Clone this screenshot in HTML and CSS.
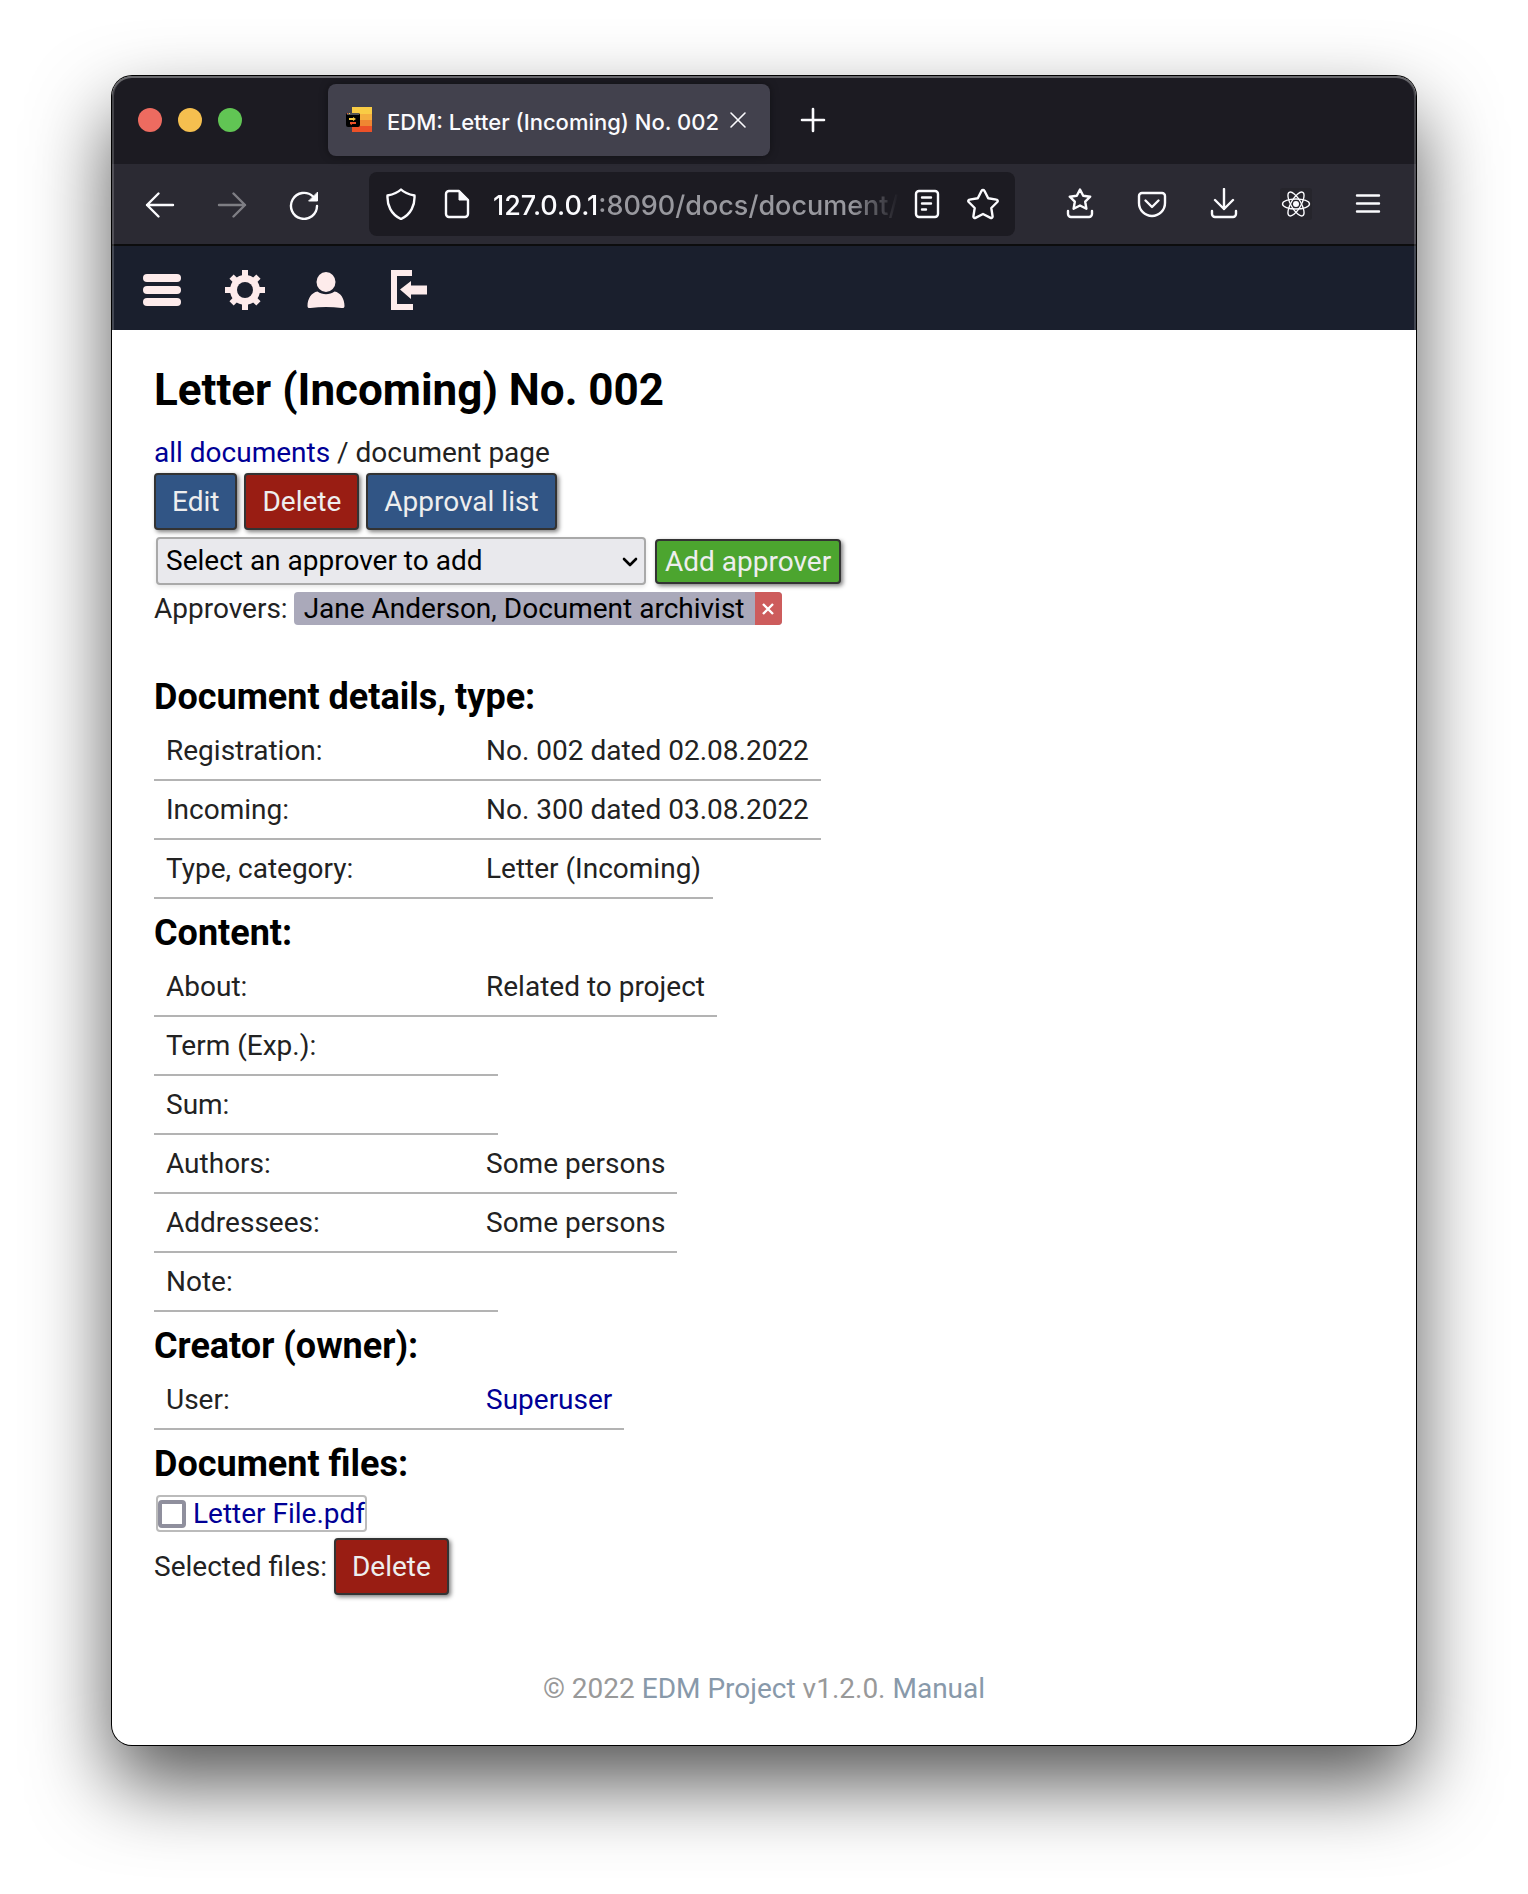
FILE: index.html
```html
<!DOCTYPE html>
<html lang="en">
<head>
<meta charset="utf-8">
<meta name="viewport" content="width=device-width, initial-scale=1">
<title>EDM: Letter (Incoming) No. 002</title>
<link rel="stylesheet" href="styles.css">
</head>
<body>
<div class="window">
  <div class="tabbar">
    <div class="lights"><span class="light light-close"></span><span class="light light-min"></span><span class="light light-max"></span></div>
    <div class="tab">
      <svg class="favicon" width="28" height="28" viewBox="0 0 28 28" aria-hidden="true">
        <path fill="#f9cc45" d="M7 1h20v7H7z"/><path fill="#f4ae3f" d="M7 8h20v6H7z"/><path fill="#ef8632" d="M7 14h20v6H7z"/><path fill="#ec5128" d="M7 20h20v6H7z"/>
        <rect x="1" y="7" width="14" height="14" rx="2" fill="#000"/><path fill="#555" d="M2 7h12v2H2z"/><path fill="#ec5128" d="M2 7h1v1H2z"/><path fill="#f9cc45" d="M4 7h1v1H4z"/>
        <path fill="#f9cc45" d="M4 12h4v-1l3 2-3 2v-1H4z"/><path fill="#ec5128" d="M5 16h6v2H7v1l-2-1z"/>
      </svg>
      <span class="tab-title">EDM: Letter (Incoming) No. 002</span>
      <button class="tab-close" aria-label="Close tab"><svg width="18" height="18" viewBox="0 0 18 18"><path d="M2 2l14 14M16 2L2 16" stroke="#fbfbfe" stroke-width="1.6" stroke-linecap="round"/></svg></button>
    </div>
    <button class="tab-new" aria-label="New tab"><svg width="26" height="26" viewBox="0 0 26 26"><path d="M13 2v22M2 13h22" stroke="#fbfbfe" stroke-width="2.6" stroke-linecap="round"/></svg></button>
  </div>

  <div class="toolbar">
    <button class="tool" aria-label="Back"><svg viewBox="0 0 32 32"><path d="M29 17H3M14.500 5.500L3 17l11.500 11.500"/></svg></button>
    <button class="tool tool-off" aria-label="Forward"><svg viewBox="0 0 32 32"><path d="M3 17h26M17.500 5.500L29 17 17.500 28.500"/></svg></button>
    <button class="tool" aria-label="Reload"><svg viewBox="0 0 32 32"><path d="M29 18A13 13 0 1 1 25 8.500"/><path d="M29.500 4.500v8.500h-8.500z" fill="#fbfbfe" stroke-width="1"/></svg></button>
    <div class="address">
      <button class="mini" aria-label="Tracking protection"><svg viewBox="0 0 32 32"><path d="M16 1.500C13 4.500 7.500 6.500 2.500 7.500 2 17 6 26.500 16 31 26 26.500 30 17 29.500 7.500 24.500 6.500 19 4.500 16 1.500z"/></svg></button>
      <button class="mini" aria-label="Site information"><svg viewBox="0 0 32 32"><path d="M8 3h10l9 9v14a3 3 0 0 1-3 3H8a3 3 0 0 1-3-3V6a3 3 0 0 1 3-3z"/><path d="M18 3v9h9z" fill="#fbfbfe" stroke-width="1"/></svg></button>
      <div class="url" role="textbox" aria-label="Address"><span class="url-host">127.0.0.1</span>:8090/docs/document/</div>
      <button class="mini" aria-label="Reader view"><svg viewBox="0 0 32 32"><rect x="5" y="3" width="22" height="26" rx="3"/><path d="M11 9.500h9M11 15.500h9M11 21.500h4"/></svg></button>
      <button class="mini" aria-label="Bookmark"><svg viewBox="0 0 32 32"><path d="M14.600 2.800a1.600 1.600 0 0 1 2.800 0l3.800 7.500 8.300 1.300a1.400 1.400 0 0 1 .8 2.400l-6 6 1.300 8.400a1.500 1.500 0 0 1-2.100 1.500L16 26l-7.500 3.900a1.500 1.500 0 0 1-2.100-1.500l1.300-8.400-6-6a1.400 1.400 0 0 1 .8-2.400l8.300-1.300z"/></svg></button>
    </div>
    <button class="tool" aria-label="Bookmarks"><svg viewBox="0 0 32 32"><path d="M16 1.500l3.200 6.200 7 1-5 5 1.200 7-6.400-3.200-6.400 3.200 1.200-7-5-5 7-1z"/><path d="M4 23v3a3 3 0 0 0 3 3h18a3 3 0 0 0 3-3v-3"/></svg></button>
    <button class="tool" aria-label="Pocket"><svg viewBox="0 0 32 32"><path d="M6 5h20a3 3 0 0 1 3 3v7a13 13 0 0 1-26 0V8a3 3 0 0 1 3-3z"/><path d="M9.500 12.500l6.500 6.500 6.500-6.500"/></svg></button>
    <button class="tool" aria-label="Downloads"><svg viewBox="0 0 32 32"><path d="M16 1v20M7 12l9 9 9-9M4 23v3a3 3 0 0 0 3 3h18a3 3 0 0 0 3-3v-3"/></svg></button>
    <button class="tool" aria-label="React developer tools"><svg viewBox="0 0 32 32"><rect width="32" height="32" rx="3" fill="#26252c" stroke="none"/><g stroke-width="1.4"><ellipse cx="16" cy="16" rx="13.500" ry="5"/><ellipse cx="16" cy="16" rx="13.500" ry="5" transform="rotate(60 16 16)"/><ellipse cx="16" cy="16" rx="13.500" ry="5" transform="rotate(120 16 16)"/></g><circle cx="16" cy="16" r="3" fill="#fbfbfe" stroke="none"/></svg></button>
    <button class="tool" aria-label="Menu"><svg viewBox="0 0 32 32"><path d="M5 7.500h22M5 15.500h22M5 23.500h22"/></svg></button>
  </div>

  <nav class="nav">
    <a class="nav-link" href="#menu" aria-label="Menu"><svg viewBox="0 0 40 40"><rect y="4" width="38" height="8" rx="4"/><rect y="16" width="38" height="8" rx="4"/><rect y="28" width="38" height="8" rx="4"/></svg></a>
    <a class="nav-link" href="#settings" aria-label="Settings"><svg viewBox="0 0 40 40"><path d="M17 0h6v40h-6zM0 17h40v6H0z"/><path d="M17 1h6v38h-6zM1 17h38v6H1z" transform="rotate(45 20 20)"/><circle cx="20" cy="20" r="15"/><circle cx="20" cy="20" r="8" fill="#1a1f2d"/></svg></a>
    <a class="nav-link" href="#profile" aria-label="Profile"><svg viewBox="0 0 40 40"><ellipse cx="19" cy="12" rx="9.500" ry="10"/><path d="M10.500 21.500c5 3.500 12 3.500 17 0 6 1 10 7 10 14.500 0 2-1.500 2.200-3 2-10-1.200-21-1.200-31 0-1.500.200-3 0-3-2 0-7.500 4-13.500 10-14.500z"/></svg></a>
    <a class="nav-link" href="#logout" aria-label="Log out"><svg viewBox="0 0 40 40"><path d="M2 0h21v6H8v28h16v6H2zM11 19.500L22 11v4.500h16v9H22V29z"/></svg></a>
  </nav>

  <main class="content">
    <h1 class="title">Letter (Incoming) No. 002</h1>
    <div class="crumbs"><a href="#documents">all documents</a> / document page</div>
    <div class="actions">
      <button class="btn btn-blue">Edit</button>
      <button class="btn btn-red">Delete</button>
      <button class="btn btn-blue">Approval list</button>
    </div>
    <form class="approver-form">
      <div class="select-wrap">
        <select class="select" aria-label="Approver"><option>Select an approver to add</option></select>
        <svg class="chevron" width="16" height="10" viewBox="0 0 16 10" aria-hidden="true"><path d="M2 2l6 6 6-6" fill="none" stroke="#000" stroke-width="2.600" stroke-linecap="round" stroke-linejoin="round"/></svg>
      </div>
      <button class="btn btn-green" type="button">Add approver</button>
    </form>
    <div class="approvers">
      <span>Approvers:</span>
      <span class="chip"><span class="chip-name">Jane Anderson, Document archivist</span><button class="chip-remove" aria-label="Remove"><svg width="14" height="14" viewBox="0 0 14 14"><path d="M2 2l10 10M12 2L2 12" stroke="#fff" stroke-width="2.400"/></svg></button></span>
    </div>

    <h2 class="heading">Document details, type:</h2>
    <table class="details">
      <tr><th scope="row">Registration:</th><td>No. 002 dated 02.08.2022</td></tr>
      <tr><th scope="row">Incoming:</th><td>No. 300 dated 03.08.2022</td></tr>
      <tr><th scope="row">Type, category:</th><td>Letter (Incoming)</td></tr>
    </table>
    <h2 class="heading">Content:</h2>
    <table class="details">
      <tr><th scope="row">About:</th><td>Related to project</td></tr>
      <tr><th scope="row">Term (Exp.):</th><td></td></tr>
      <tr><th scope="row">Sum:</th><td></td></tr>
      <tr><th scope="row">Authors:</th><td>Some persons</td></tr>
      <tr><th scope="row">Addressees:</th><td>Some persons</td></tr>
      <tr><th scope="row">Note:</th><td></td></tr>
    </table>
    <h2 class="heading">Creator (owner):</h2>
    <table class="details">
      <tr><th scope="row">User:</th><td><a href="#superuser">Superuser</a></td></tr>
    </table>
    <h2 class="heading">Document files:</h2>
    <div class="file"><input class="check" type="checkbox" id="file-1" aria-labelledby="file-1-name"><a href="#file" id="file-1-name">Letter File.pdf</a></div>
    <div class="selected"><span>Selected files:</span><button class="btn btn-red">Delete</button></div>
  </main>

  <footer class="footer">© 2022 <a href="#project">EDM Project</a> v1.2.0. <a href="#manual">Manual</a></footer>
</div>
</body>
</html>
```
FILE: styles.css
```css
* { box-sizing: border-box; }

body {
  margin: 0;
  padding: 76px 112px 148px;
  background: #fff;
  color: #222;
  font: 28px/33px Roboto, sans-serif;
}

a { color: #000096; text-decoration: none; }
button { margin: 0; padding: 0; border: 0; background: none; font: inherit; }
svg { display: block; }

.window {
  position: relative;
  overflow: hidden;
  border-radius: 20px;
  background: #fff;
  box-shadow: 0 0 0 1px #000, 0 38px 80px rgba(0, 0, 0, .67);
}

/* light rim over the window edge */
.window::after {
  content: "";
  position: absolute;
  inset: 0;
  border-radius: 20px;
  box-shadow: inset 0 0 0 2px rgba(255, 255, 255, .18), inset 0 2px 0 rgba(255, 255, 255, .2);
  pointer-events: none;
}

/* Browser chrome */
.tabbar {
  display: flex;
  align-items: center;
  height: 88px;
  padding-left: 26px;
  background: #1c1b22;
}
.lights { display: flex; gap: 16px; margin-right: 86px; }
.light { width: 24px; height: 24px; border-radius: 50%; }
.light-close { background: #ed6b60; }
.light-min { background: #f5bf4f; }
.light-max { background: #61c554; }

.tab {
  display: flex;
  align-items: center;
  width: 442px;
  height: 72px;
  padding: 0 17px;
  border-radius: 8px;
  background: #42414d;
  box-shadow: 0 0 8px rgba(0, 0, 0, .4);
}
.favicon { margin-right: 14px; }
.tab-title {
  flex: 1;
  padding-top: 3px;
  color: #fbfbfe;
  font: 500 22px/32px Inter, sans-serif;
  white-space: nowrap;
}
.tab-close { margin-right: 6px; }
.tab-new { margin-left: 30px; }

.toolbar {
  display: flex;
  align-items: center;
  height: 82px;
  padding: 0 12px;
  border-bottom: 2px solid #0c0c0d;
  background: #2b2a33;
}
.tool, .mini { display: flex; flex: none; justify-content: center; }
.tool { width: 72px; }
.mini { width: 56px; }
.tool svg, .mini svg {
  width: 32px;
  height: 32px;
  fill: none;
  stroke: #fbfbfe;
  stroke-width: 2.4;
  stroke-linecap: round;
  stroke-linejoin: round;
}
.tool-off { opacity: .4; }

.address {
  display: flex;
  flex: 1;
  align-items: center;
  min-width: 0;
  height: 64px;
  margin: 0 29px;
  padding: 0 4px;
  border-radius: 8px;
  background: #1c1b22;
}
.url {
  flex: 1;
  min-width: 0;
  margin-left: 8px;
  padding-top: 3px;
  overflow: hidden;
  color: #98989e;
  font: 500 27px/40px Inter, sans-serif;
  white-space: nowrap;
  mask-image: linear-gradient(to left, transparent 0, #000 48px);
}
.url-host { color: #fbfbfe; }

/* Application */
.nav {
  display: flex;
  align-items: center;
  height: 84px;
  padding: 4px 10px 0;
  background: #1a1f2d;
}
.nav-link { display: flex; justify-content: center; width: 82px; }
.nav-link svg { width: 40px; height: 40px; fill: #fdebeb; }

.content { padding: 32px 42px 0; }
.title { margin: 0 0 16px; color: #000; font-size: 44px; line-height: 56px; }
.crumbs { margin-bottom: 1px; line-height: 38px; }
.actions { display: flex; gap: 7px; margin-bottom: 7px; }

.btn {
  height: 57px;
  padding: 0 16px;
  border: 2px solid #333;
  border-radius: 4px;
  color: #eee;
  box-shadow: 2px 2px 4px rgba(0, 0, 0, .5);
}
.btn-blue { background: #315585; }
.btn-red { background: #991d13; }
.btn-green { height: 45px; padding: 0 8px; background: #4ca52f; }

.approver-form { display: flex; align-items: center; gap: 9px; margin: 0 2px 7px; }
.select-wrap { position: relative; }
.select {
  display: block;
  width: 490px;
  height: 48px;
  padding: 0 8px 2px;
  border: 2px solid #a9a9a9;
  border-radius: 4px;
  background: #e9e9ed;
  color: #000;
  font: inherit;
  appearance: none;
  box-shadow: 0 2px 4px rgba(0, 0, 0, .1);
}
.chevron { position: absolute; top: 20px; right: 8px; pointer-events: none; }

.approvers { display: flex; gap: 6px; margin-bottom: 38px; }
.chip { display: flex; overflow: hidden; border-radius: 4px; background: #aaa9ba; color: #000; }
.chip-name { padding: 0 10px; }
.chip-remove { display: flex; align-items: center; justify-content: center; width: 27px; background: #cd5c5c; }

.heading { margin: 0; padding: 13px 0 4px; color: #000; font-size: 36px; line-height: 42px; }

.details, .details tbody { display: block; }
.details tr { display: flex; width: fit-content; border-bottom: 2px solid #b3b3b3; }
.details th, .details td { height: 57px; padding: 12px; text-align: left; }
.details th { width: 320px; font-weight: 400; }

.file {
  display: flex;
  align-items: center;
  gap: 7px;
  width: fit-content;
  height: 37px;
  margin: 6px 2px;
  border: 2px solid #bbb;
  border-radius: 4px;
}
.check {
  width: 28px;
  height: 28px;
  margin: 0;
  border: 4px solid #8f8f9d;
  border-radius: 4px;
  background: #fff;
  appearance: none;
}
.check:checked { background: #0060df; }
.selected { display: flex; align-items: center; gap: 7px; }

.footer { padding: 77px 42px 40px; color: #999; text-align: center; }
.footer a { color: #8899aa; }
```
